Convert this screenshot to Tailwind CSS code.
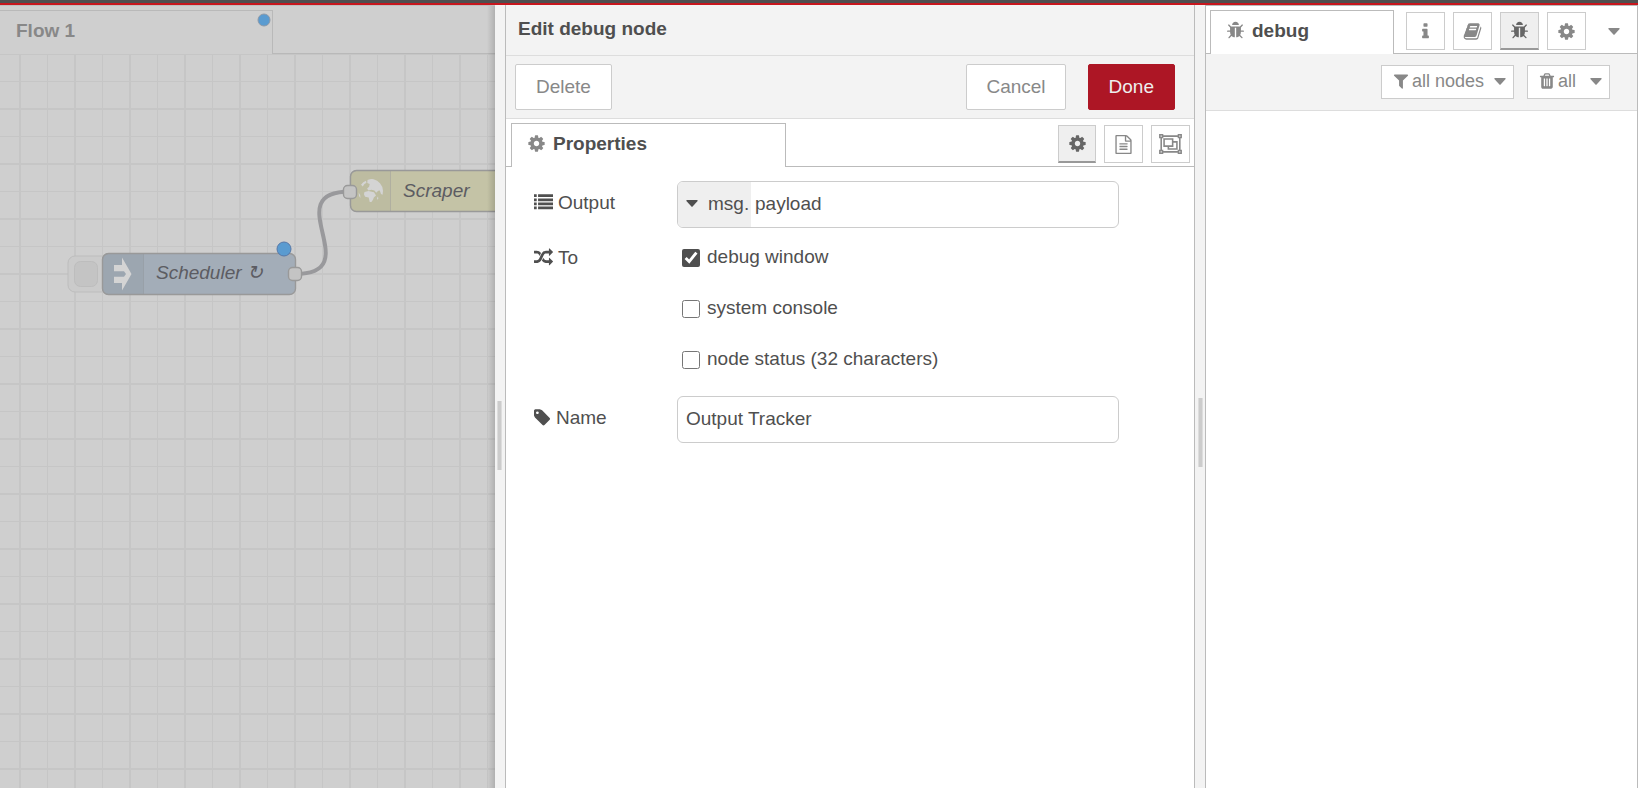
<!DOCTYPE html>
<html lang="en">
  <head>
    <meta charset="UTF-8" />
    <meta name="viewport" content="width=device-width, initial-scale=1.0" />
    <title>Flow editor</title>
    <script src="https://cdn.jsdelivr.net/npm/@tailwindcss/browser@4"></script>
  </head>
  <body class="flex min-h-screen flex-col bg-white font-['Liberation_Sans',Arial,sans-serif] text-[19px] leading-6 text-[#4f4f4f]">
    <!-- icon sprite -->
    <svg class="hidden">
      <symbol id="cog" viewBox="0 0 1792 1792"><path d="M1152 896q0-106-75-181t-181-75-181 75-75 181 75 181 181 75 181-75 75-181zm512-109v222q0 12-8 23t-20 13l-185 28q-19 54-39 91 35 50 107 138 10 12 10 25t-9 23q-27 37-99 108t-94 71q-12 0-26-9l-138-108q-44 23-91 38-16 136-29 186-7 28-36 28h-222q-14 0-24.5-8.5t-11.5-21.5l-28-184q-49-16-90-37l-141 107q-10 9-25 9-14 0-25-11-126-114-165-168-7-10-7-23 0-12 8-23 15-21 51-66.5t54-70.5q-27-50-41-99l-183-27q-13-2-21-12.5t-8-23.5v-222q0-12 8-23t19-13l186-28q14-46 39-92-40-57-107-138-10-12-10-24 0-10 9-23 26-36 98.5-107.5t94.5-71.5q13 0 26 10l138 107q44-23 91-38 16-136 29-186 7-28 36-28h222q14 0 24.5 8.5t11.5 21.5l28 184q49 16 90 37l142-107q9-9 24-9 13 0 25 10 129 119 165 170 7 8 7 22 0 12-8 23-15 21-51 66.5t-54 70.5q26 50 41 98l183 28q13 2 21 12.5t8 23.5z" /></symbol>
      <symbol id="list" viewBox="0 0 1792 1792"><path d="M0 128h256v256H0zM0 512h256v256H0zM0 896h256v256H0zM0 1280h256v256H0zM384 128h1408v256H384zM384 512h1408v256H384zM384 896h1408v256H384zM384 1280h1408v256H384z" /></symbol>
      <symbol id="random" viewBox="0 0 1792 1792"><path d="M666 481q-60 92-137 273-22-45-37-72.5t-40.5-63.5-51-56.5-63-35-81.5-14.5h-224q-14 0-23-9t-9-23v-192q0-14 9-23t23-9h224q250 0 410 225zm1126 799q0 14-9 23l-320 320q-9 9-23 9-13 0-22.5-9.5t-9.5-22.5v-192q-32 0-85 .5t-81 1-73-1-71-5-64-10.5-63-18.5-58-28.5-59-40-55-53.5-56-69.5q59-93 136-273 22 45 37 72.5t40.5 63.5 51 56.5 63 35 81.5 14.5h256v-192q0-14 9-23t23-9q12 0 24 10l319 319q9 9 9 23zm0-896q0 14-9 23l-320 320q-9 9-23 9-13 0-22.5-9.5t-9.5-22.5v-192h-256q-48 0-87 15t-69 45-51 61.5-45 77.5q-32 62-78 171-29 66-49.5 111t-54 105-64 100-74 83-90 68.5-106.5 42-128 16.5h-224q-14 0-23-9t-9-23v-192q0-14 9-23t23-9h224q48 0 87-15t69-45 51-61.5 45-77.5q32-62 78-171 29-66 49.5-111t54-105 64-100 74-83 90-68.5 106.5-42 128-16.5h256v-192q0-14 9-23t23-9q12 0 24 10l319 319q9 9 9 23z" /></symbol>
      <symbol id="tag" viewBox="0 0 1792 1792"><path d="M448 448q0-53-37.5-90.5t-90.5-37.5-90.5 37.5-37.5 90.5 37.5 90.5 90.5 37.5 90.5-37.5 37.5-90.5zm1067 576q0 53-37 90l-491 492q-39 37-91 37-53 0-90-37l-715-716q-38-37-64.5-101t-26.5-117v-416q0-52 38-90t90-38h416q53 0 117 26.5t102 64.5l715 714q37 39 37 91z" /></symbol>
      <symbol id="bug" viewBox="0 0 1792 1792"><path d="M1696 960q0 26-19 45t-45 19h-224q0 171-67 290l208 209q19 19 19 45t-19 45q-18 19-45 19t-45-19l-198-197q-5 5-15 13t-42 28.5-65 36.5-82 29-97 13v-896h-128v896q-51 0-101.5-13.5t-87-33-66-39-43.5-32.5l-15-14-183 207q-20 21-48 21-24 0-43-16-19-18-20.5-44.5t15.5-46.5l202-227q-58-114-58-274h-224q-26 0-45-19t-19-45 19-45 45-19h224v-294l-173-173q-19-19-19-45t19-45 45-19 45 19l173 173h844l173-173q19-19 45-19t45 19 19 45-19 45l-173 173v294h224q26 0 45 19t19 45zm-480-576h-640q0-133 93.5-226.5t226.5-93.5 226.5 93.5 93.5 226.5z" /></symbol>
      <symbol id="info" viewBox="0 0 1792 1792"><path d="M1216 1344v128q0 26-19 45t-45 19h-512q-26 0-45-19t-19-45v-128q0-26 19-45t45-19h64v-384h-64q-26 0-45-19t-19-45v-128q0-26 19-45t45-19h384q26 0 45 19t19 45v576h64q26 0 45 19t19 45zm-128-1152v192q0 26-19 45t-45 19h-256q-26 0-45-19t-19-45v-192q0-26 19-45t45-19h256q26 0 45 19t19 45z" /></symbol>
      <symbol id="book" viewBox="0 0 1792 1792"><path d="M1703 478q40 57 18 129l-275 906q-19 64-76.5 107.5t-122.5 43.5h-923q-77 0-148.5-53.5t-99.5-131.5q-24-67-2-127 0-4 3-27t4-37q1-8-3-21.5t-3-19.5q2-11 8-21t16.5-23.5 16.5-23.5q23-38 45-91.5t30-91.5q3-10 .5-30t-.5-28q3-11 17-28t17-23q21-36 42-92t25-90q1-9-2.5-32t.5-28q4-13 22-30.5t22-22.5q19-26 42.5-84.5t27.5-96.5q1-8-3-25.5t-2-26.5q2-8 9-18t18-23 17-21q8-12 16.5-30.5t15-35 16-36 19.5-32 26.5-23.5 36-11.5 47.5 5.5l-1 3q38-9 51-9h761q74 0 114 56t18 130l-274 906q-36 119-71.5 153.5t-128.5 34.5h-869q-27 0-38 15-11 16-1 43 24 70 144 70h923q29 0 56-15.5t35-41.5l300-987q7-22 5-57 38 15 59 43zm-1064 2q-4 13 2 22.5t20 9.5h608q13 0 25.5-9.5t16.5-22.5l21-64q4-13-2-22.5t-20-9.5h-608q-13 0-25.5 9.5t-16.5 22.5zm-83 256q-4 13 2 22.5t20 9.5h608q13 0 25.5-9.5t16.5-22.5l21-64q4-13-2-22.5t-20-9.5h-608q-13 0-25.5 9.5t-16.5 22.5z" /></symbol>
      <symbol id="filter" viewBox="0 0 1792 1792"><path d="M1595 295q17 41-14 70l-493 493v742q0 42-39 59-13 5-25 5-27 0-45-19l-256-256q-19-19-19-45v-486l-493-493q-31-29-14-70 17-39 59-39h1280q42 0 59 39z" /></symbol>
      <symbol id="trash" viewBox="0 0 1792 1792"><path d="M704 1376v-704q0-14-9-23t-23-9h-64q-14 0-23 9t-9 23v704q0 14 9 23t23 9h64q14 0 23-9t9-23zm256 0v-704q0-14-9-23t-23-9h-64q-14 0-23 9t-9 23v704q0 14 9 23t23 9h64q14 0 23-9t9-23zm256 0v-704q0-14-9-23t-23-9h-64q-14 0-23 9t-9 23v704q0 14 9 23t23 9h64q14 0 23-9t9-23zm-544-992h448l-48-117q-7-9-17-11h-317q-10 2-17 11zm928 32v64q0 14-9 23t-23 9h-96v948q0 83-47 143.5t-113 60.5h-832q-66 0-113-58.5t-47-141.5v-952h-96q-14 0-23-9t-9-23v-64q0-14 9-23t23-9h309l70-167q15-37 54-63t79-26h320q40 0 79 26t54 63l70 167h309q14 0 23 9t9 23z" /></symbol>
      <symbol id="file" viewBox="0 0 1792 1792"><path d="M1596 380q28 28 48 76t20 88v1152q0 40-28 68t-68 28h-1344q-40 0-68-28t-28-68v-1600q0-40 28-68t68-28h896q40 0 88 20t76 48zm-444-244v376h376q-10-29-22-41l-313-313q-12-12-41-22zm384 1528v-1024h-416q-40 0-68-28t-28-68v-416h-768v1536h1280zm-1024-864q0-14 9-23t23-9h704q14 0 23 9t9 23v64q0 14-9 23t-23 9h-704q-14 0-23-9t-9-23v-64zm736 224q14 0 23 9t9 23v64q0 14-9 23t-23 9h-704q-14 0-23-9t-9-23v-64q0-14 9-23t23-9h704zm0 256q14 0 23 9t9 23v64q0 14-9 23t-23 9h-704q-14 0-23-9t-9-23v-64q0-14 9-23t23-9h704z" /></symbol>
      <symbol id="group" viewBox="0 0 2048 1792"><path d="M70 70h240v240H70zM1738 70h240v240h-240zM70 1482h240v240H70zM1738 1482h240v240h-240zM310 190h1428M310 1602h1428M190 310v1172M1858 310v1172M448 448h768v640H448zM1216 704h384v640H832v-256" fill="none" stroke="currentColor" stroke-width="140" /></symbol>
      <symbol id="caret" viewBox="0 0 12 7"><path d="M1 0h10q1 0 .6 1L6.600 6.500q-.6.500-1.200 0L.4 1Q0 0 1 0z" /></symbol>
    </svg>

    <div class="h-[5px] shrink-0 border-b-2 border-[#c7161d] bg-[#4f4f4f]"></div>

    <div class="grid flex-1 grid-cols-[495fr_710fr_433fr]">
      <!-- workspace -->
      <main class="relative flex min-w-0 flex-col overflow-hidden border-t border-[#bfbfbf] bg-[#cfcfcf]">
        <nav class="flex h-12 shrink-0 pt-1">
          <a href="#flow-1" class="relative flex h-11 w-[273px] items-center border-t border-r border-[#b9b9b9] pb-1 pl-4 font-bold text-[#888]">
            Flow 1
            <svg class="absolute top-0.5 right-px size-3.5" viewBox="0 0 14 14"><circle cx="7" cy="7" r="6" fill="#5a9bd0" stroke="#8c99a8" /></svg>
          </a>
          <div class="flex-1 border-b border-[#b9b9b9]"></div>
        </nav>
        <svg class="min-h-0 w-full flex-1 text-[19px] italic" height="0">
          <defs>
            <pattern id="grid" width="55" height="55" x="20" y="0" patternUnits="userSpaceOnUse">
              <path d="M27 0v55M0 27h55" transform="translate(.5 .5)" stroke="#c6c6c6" />
              <path d="M0 0h55v1H0zM0 54h55v1H0zM0 0h1v55H0zM54 0h1v55h-1z" fill="#c6c6c6" />
            </pattern>
          </defs>
          <rect width="100%" height="100%" fill="url(#grid)" />
          <path d="M295 220C369 220 276 137.500 350 137.500" fill="none" stroke="#99999c" stroke-width="4" />
          <g stroke="#bdbdbd">
            <rect x="68" y="202" width="50" height="36" rx="7" fill="#cbcbcb" />
            <rect x="74.500" y="207.500" width="23" height="25" rx="6" fill="#c4c4c4" />
          </g>
          <rect x="102.500" y="199.500" width="193" height="41" rx="6" fill="#a3adb8" />
          <path d="M143.500 199.500v41H108.500a6 6 0 0 1-6-6v-29a6 6 0 0 1 6-6z" fill="#9ca6b0" stroke="#98a0a8" />
          <rect x="102.500" y="199.500" width="193" height="41" rx="6" fill="none" stroke="#999" stroke-width="1.400" />
          <path d="M114 211h8v-7.500l9.500 16.500-9.500 16.500V229h-8v-6.200h10l2-2.800-2-2.800h-10z" fill="#d4d4d4" />
          <text x="156" y="225" fill="#5c5c62">Scheduler ↻</text>
          <circle cx="284" cy="195" r="7" fill="#5a9bd0" stroke="#5778a8" />
          <rect x="288.500" y="213.500" width="13" height="13" rx="4" fill="#c4c4c4" stroke="#999" stroke-width="1.400" />
          <rect x="350.500" y="116.500" width="240" height="41" rx="6" fill="#c4c3a6" />
          <path d="M390.500 116.500v41H356.500a6 6 0 0 1-6-6v-29a6 6 0 0 1 6-6z" fill="#bdbca1" stroke="#b0afa0" />
          <rect x="350.500" y="116.500" width="240" height="41" rx="6" fill="none" stroke="#999" stroke-width="1.400" />
          <!-- globe -->
          <g fill="#d4d4d4">
            <path d="M367.500 126q3-1.200 6-.8 4 .8 6.500 4 3 3.500 3 7.500l-.4 4-1.600-.8-1.200-3.400-1.600.2-2 2-1.800-2.200-3-.8-3 .8-1.300-2 2-1.700.6-2.800-2.400-1z" />
            <path d="M361 130.700q2-2.800 5-4l.4 2-2.200 1.600-1.400 2.200z" />
            <path d="M364.500 138l4-1 2 .6 3.500.6 2 3.300-2.200 2-.8 2.300-1.600 2.200h-1.700l-1-4.500-3.600-.8-1.200-2.400z" />
            <path d="M358.600 138.500l1.600 2.500.2 3-1.400-2zM377 144l1-1.400.3 2.200-1 1z" />
          </g>
          <text x="403" y="143" fill="#5c5c62">Scraper</text>
          <rect x="343.500" y="131.500" width="13" height="13" rx="4" fill="#c4c4c4" stroke="#999" stroke-width="1.400" />
        </svg>
        <div class="absolute inset-y-0 right-0 w-2 bg-linear-to-l from-black/15 to-transparent"></div>
      </main>

      <!-- edit tray -->
      <section class="flex min-w-0 bg-[#f3f3f3]">
        <div class="w-2.5 shrink-0 pt-[396px] pl-0.5"><div class="h-[69px] w-[5px] border-x border-[#ddd] bg-[#ccc]"></div></div>
        <div class="flex min-w-0 flex-1 flex-col border-x border-[#bbb] bg-white">
          <h2 class="h-[51px] shrink-0 border-b border-[#ddd] bg-[#f3f3f3] pt-3 pl-3 font-bold">Edit debug node</h2>
          <div class="flex h-[63px] shrink-0 items-center border-b border-[#ddd] bg-[#f3f3f3] pr-[19px] pl-[9px] text-[#888]">
            <button class="mr-auto h-[46px] rounded-xs border border-[#ccc] bg-white px-5">Delete</button>
            <button class="mr-[22px] h-[46px] rounded-xs border border-[#ccc] bg-white px-[19px]">Cancel</button>
            <button class="h-[46px] rounded-xs border border-[#ad1625] bg-[#ad1625] px-5 text-[#eee]">Done</button>
          </div>
          <nav class="flex h-12 shrink-0 pt-1 text-[#888]">
            <div class="w-[5px] border-b border-[#bbb]"></div>
            <a href="#properties" class="flex w-[275px] items-center gap-[7px] border border-b-0 border-[#bbb] pb-1 pl-[15px] font-bold text-[#4f4f4f]">
              <svg class="size-[19px] fill-[#888]"><use href="#cog" /></svg>Properties
            </a>
            <div class="flex flex-1 items-start justify-end gap-2 border-b border-[#bbb] pt-0.5 pr-1">
              <button aria-label="Properties" class="flex size-[38px] items-center justify-center border border-b-2 border-[#ccc] border-b-[#999] bg-[#efefef] text-[#666]"><svg class="size-[19px] fill-current"><use href="#cog" /></svg></button>
              <button aria-label="Description" class="flex h-[38px] w-[39px] items-center justify-center border border-[#ccc]"><svg class="size-[19px] fill-current"><use href="#file" /></svg></button>
              <button aria-label="Appearance" class="flex h-[38px] w-[39px] items-center justify-center border border-[#ccc]"><svg class="h-5 w-[23px] fill-current"><use href="#group" /></svg></button>
            </div>
          </nav>
          <form class="px-7 pt-3.5">
            <div class="flex items-center">
              <label for="output" class="flex w-[143px] items-center gap-[5px] pb-1"><svg class="size-[19px] fill-current"><use href="#list" /></svg>Output</label>
              <div class="flex h-[47px] w-[70%] overflow-hidden rounded-md border border-[#ccc]">
                <button type="button" class="flex w-[73px] shrink-0 items-center gap-2.5 bg-[#efefef] pb-0.5 pl-2"><svg class="h-[7px] w-3 fill-current"><use href="#caret" /></svg>msg.</button>
                <input id="output" value="payload" class="min-w-0 flex-1 px-1 pb-0.5 outline-none" />
              </div>
            </div>
            <div class="mt-1 mb-[11px] flex">
              <div class="flex h-[51px] w-[143px] items-center gap-[5px]"><svg class="size-[19px] fill-current"><use href="#random" /></svg>To</div>
              <div class="w-[70%] pl-[5px]">
                <label class="flex h-[51px] items-center gap-[7px]"><input type="checkbox" checked class="size-[18px] accent-[#4f4f4f]" /><span class="pb-0.5">debug window</span></label>
                <label class="flex h-[51px] items-center gap-[7px]"><input type="checkbox" class="size-[18px] accent-[#4f4f4f]" /><span class="pb-0.5">system console</span></label>
                <label class="flex h-[51px] items-center gap-[7px]"><input type="checkbox" class="size-[18px] accent-[#4f4f4f]" /><span class="pb-0.5">node status (32 characters)</span></label>
              </div>
            </div>
            <div class="flex items-center">
              <label for="name" class="flex w-[143px] items-center gap-[3px] pb-1"><svg class="size-[19px] fill-current"><use href="#tag" /></svg>Name</label>
              <input id="name" value="Output Tracker" class="h-[47px] w-[70%] rounded-md border border-[#ccc] px-2 pb-0.5 outline-none" />
            </div>
          </form>
        </div>
        <div class="w-2.5 shrink-0 pt-[393px] pl-[3px]"><div class="h-[69px] w-[5px] border-x border-[#ddd] bg-[#ccc]"></div></div>
      </section>

      <!-- sidebar -->
      <aside class="min-w-0 border border-b-0 border-[#bbb] bg-white text-[#888]">
        <nav class="flex h-12 pt-1">
          <div class="w-1 border-b border-[#bbb]"></div>
          <a href="#debug" class="flex w-[184px] items-center gap-[7px] border border-b-0 border-[#bbb] pb-1 pl-[15px] font-bold text-[#4f4f4f]">
            <svg class="size-[19px] fill-[#888]"><use href="#bug" /></svg>debug
          </a>
          <div class="flex flex-1 items-start justify-end gap-2 border-b border-[#bbb] pt-0.5 pr-[17px]">
            <button aria-label="Info" class="flex h-[38px] w-[39px] items-center justify-center border border-[#ccc]"><svg class="size-[19px] fill-current"><use href="#info" /></svg></button>
            <button aria-label="Help" class="flex h-[38px] w-[39px] items-center justify-center border border-[#ccc]"><svg class="size-[19px] fill-current"><use href="#book" /></svg></button>
            <button aria-label="Debug" class="flex h-[38px] w-[39px] items-center justify-center border border-b-2 border-[#ccc] border-b-[#999] bg-[#efefef] text-[#666]"><svg class="size-[19px] fill-current"><use href="#bug" /></svg></button>
            <button aria-label="Configuration" class="flex h-[38px] w-[39px] items-center justify-center border border-[#ccc]"><svg class="size-[19px] fill-current"><use href="#cog" /></svg></button>
            <button aria-label="More tabs" class="ml-3.5 flex h-[38px] items-center"><svg class="h-[7px] w-3 fill-current"><use href="#caret" /></svg></button>
          </div>
        </nav>
        <div class="flex h-[57px] items-start justify-end gap-[13px] border-b border-[#ddd] bg-[#f3f3f3] pt-[11px] pr-[27px] text-lg">
          <button class="flex h-[34px] items-center border border-[#ccc] bg-white pr-[7px] pb-0.5 pl-2.5"><svg class="mr-0.5 size-[18px] fill-current"><use href="#filter" /></svg>all nodes<svg class="ml-2.5 h-[7px] w-3 fill-current"><use href="#caret" /></svg></button>
          <button class="flex h-[34px] items-center border border-[#ccc] bg-white pr-[7px] pb-0.5 pl-2.5"><svg class="mr-0.5 size-[18px] fill-current"><use href="#trash" /></svg>all<svg class="ml-3.5 h-[7px] w-3 fill-current"><use href="#caret" /></svg></button>
        </div>
      </aside>
    </div>
  </body>
</html>
